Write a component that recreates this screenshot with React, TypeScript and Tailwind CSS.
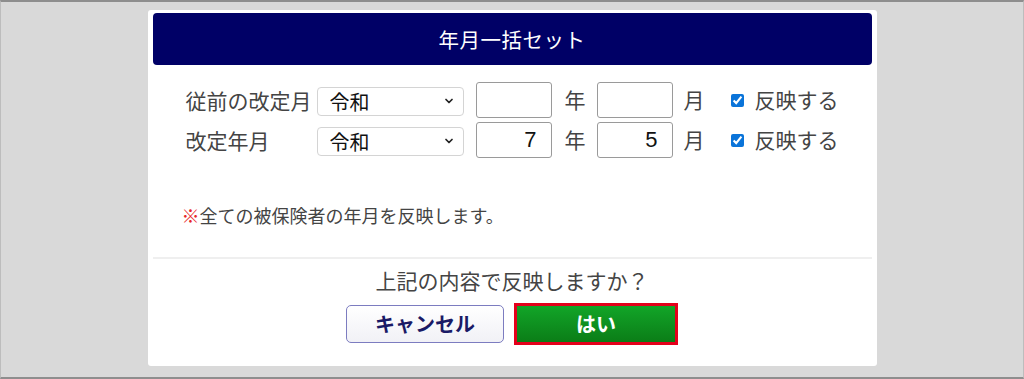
import { ChevronDown } from "lucide-react";

const font = { fontFamily: '"Noto Sans CJK JP", "Noto Sans", sans-serif' };

interface RowProps {
  label: string;
  year: string;
  month: string;
}

function EraRow({ label, year, month }: RowProps) {
  return (
    <div className="flex items-center h-10 text-[21px] text-[#444]">
      <span className="w-[131px] shrink-0 leading-none">{label}</span>
      <div className="relative w-[147px] h-[29px]">
        <select
          defaultValue="reiwa"
          className="appearance-none w-full h-full rounded-[4px] border border-[#d4d4d4] bg-white pl-3 text-[20px] text-[#111] leading-none outline-none"
          style={font}
        >
          <option value="reiwa">令和</option>
        </select>
        <ChevronDown
          className="pointer-events-none absolute right-[9px] top-[9px] w-[12px] h-[12px] text-[#222]"
          strokeWidth={3.5}
        />
      </div>
      <input
        readOnly
        value={year}
        className="ml-3 w-[76px] h-9 rounded-[3px] border border-[#9a9a9a] bg-white pr-[14px] text-right text-[22px] text-[#111] outline-none"
        style={{ fontFamily: '"Liberation Sans", Arial, sans-serif' }}
      />
      <span className="ml-[13px] w-[32px]">年</span>
      <input
        readOnly
        value={month}
        className="w-[76px] h-9 rounded-[3px] border border-[#9a9a9a] bg-white pr-[14px] text-right text-[22px] text-[#111] outline-none"
        style={{ fontFamily: '"Liberation Sans", Arial, sans-serif' }}
      />
      <span className="ml-[11px] w-[47px]">月</span>
      <label className="flex items-center gap-[11px]">
        <input
          type="checkbox"
          checked
          readOnly
          className="w-[13px] h-[13px] accent-[#0a74d9]"
        />
        <span>反映する</span>
      </label>
    </div>
  );
}

export default function App() {
  return (
    <div
      className="w-[1024px] h-[379px] bg-[#d9d9d9] border-y-2 border-[#8e8e8e] border-x border-x-[#bdbdbd] flex justify-center pt-2"
      style={font}
    >
      <div className="w-[729px] h-[356px] bg-white rounded-[3px] px-[5px] pt-[3px] flex flex-col">
        <header className="h-[52px] rounded-[4px] bg-[#000066] flex items-center justify-center">
          <h1 className="text-white text-[20.5px] tracking-[0.5px]">年月一括セット</h1>
        </header>

        <div className="pl-[33px] pt-[15px]">
          <EraRow label="従前の改定月" year="" month="" />
          <EraRow label="改定年月" year="7" month="5" />
        </div>

        <p className="pl-[29px] mt-[44px] text-[18px] text-[#444] leading-[22px]">
          <span className="text-[#e8262a]">※</span>全ての被保険者の年月を反映します。
        </p>

        <div className="mt-[31px] h-[2px] bg-[#efefef]" />

        <p className="mt-[7px] text-center text-[21px] text-[#444] leading-7">
          上記の内容で反映しますか？
        </p>

        <div className="mt-[9px] flex justify-center items-center gap-[10px]">
          <button className="w-[158px] h-[38px] rounded-[5px] border-[1.5px] border-[#7c7cc0] bg-gradient-to-b from-white to-[#f1f1f6] text-[20px] font-bold text-[#1a1a66]">
            キャンセル
          </button>
          <button className="w-[164px] h-[42px] border-[3px] border-[#e4001b] bg-gradient-to-b from-[#12a528] to-[#0b7d17] text-[20px] font-bold text-white">
            はい
          </button>
        </div>
      </div>
    </div>
  );
}
